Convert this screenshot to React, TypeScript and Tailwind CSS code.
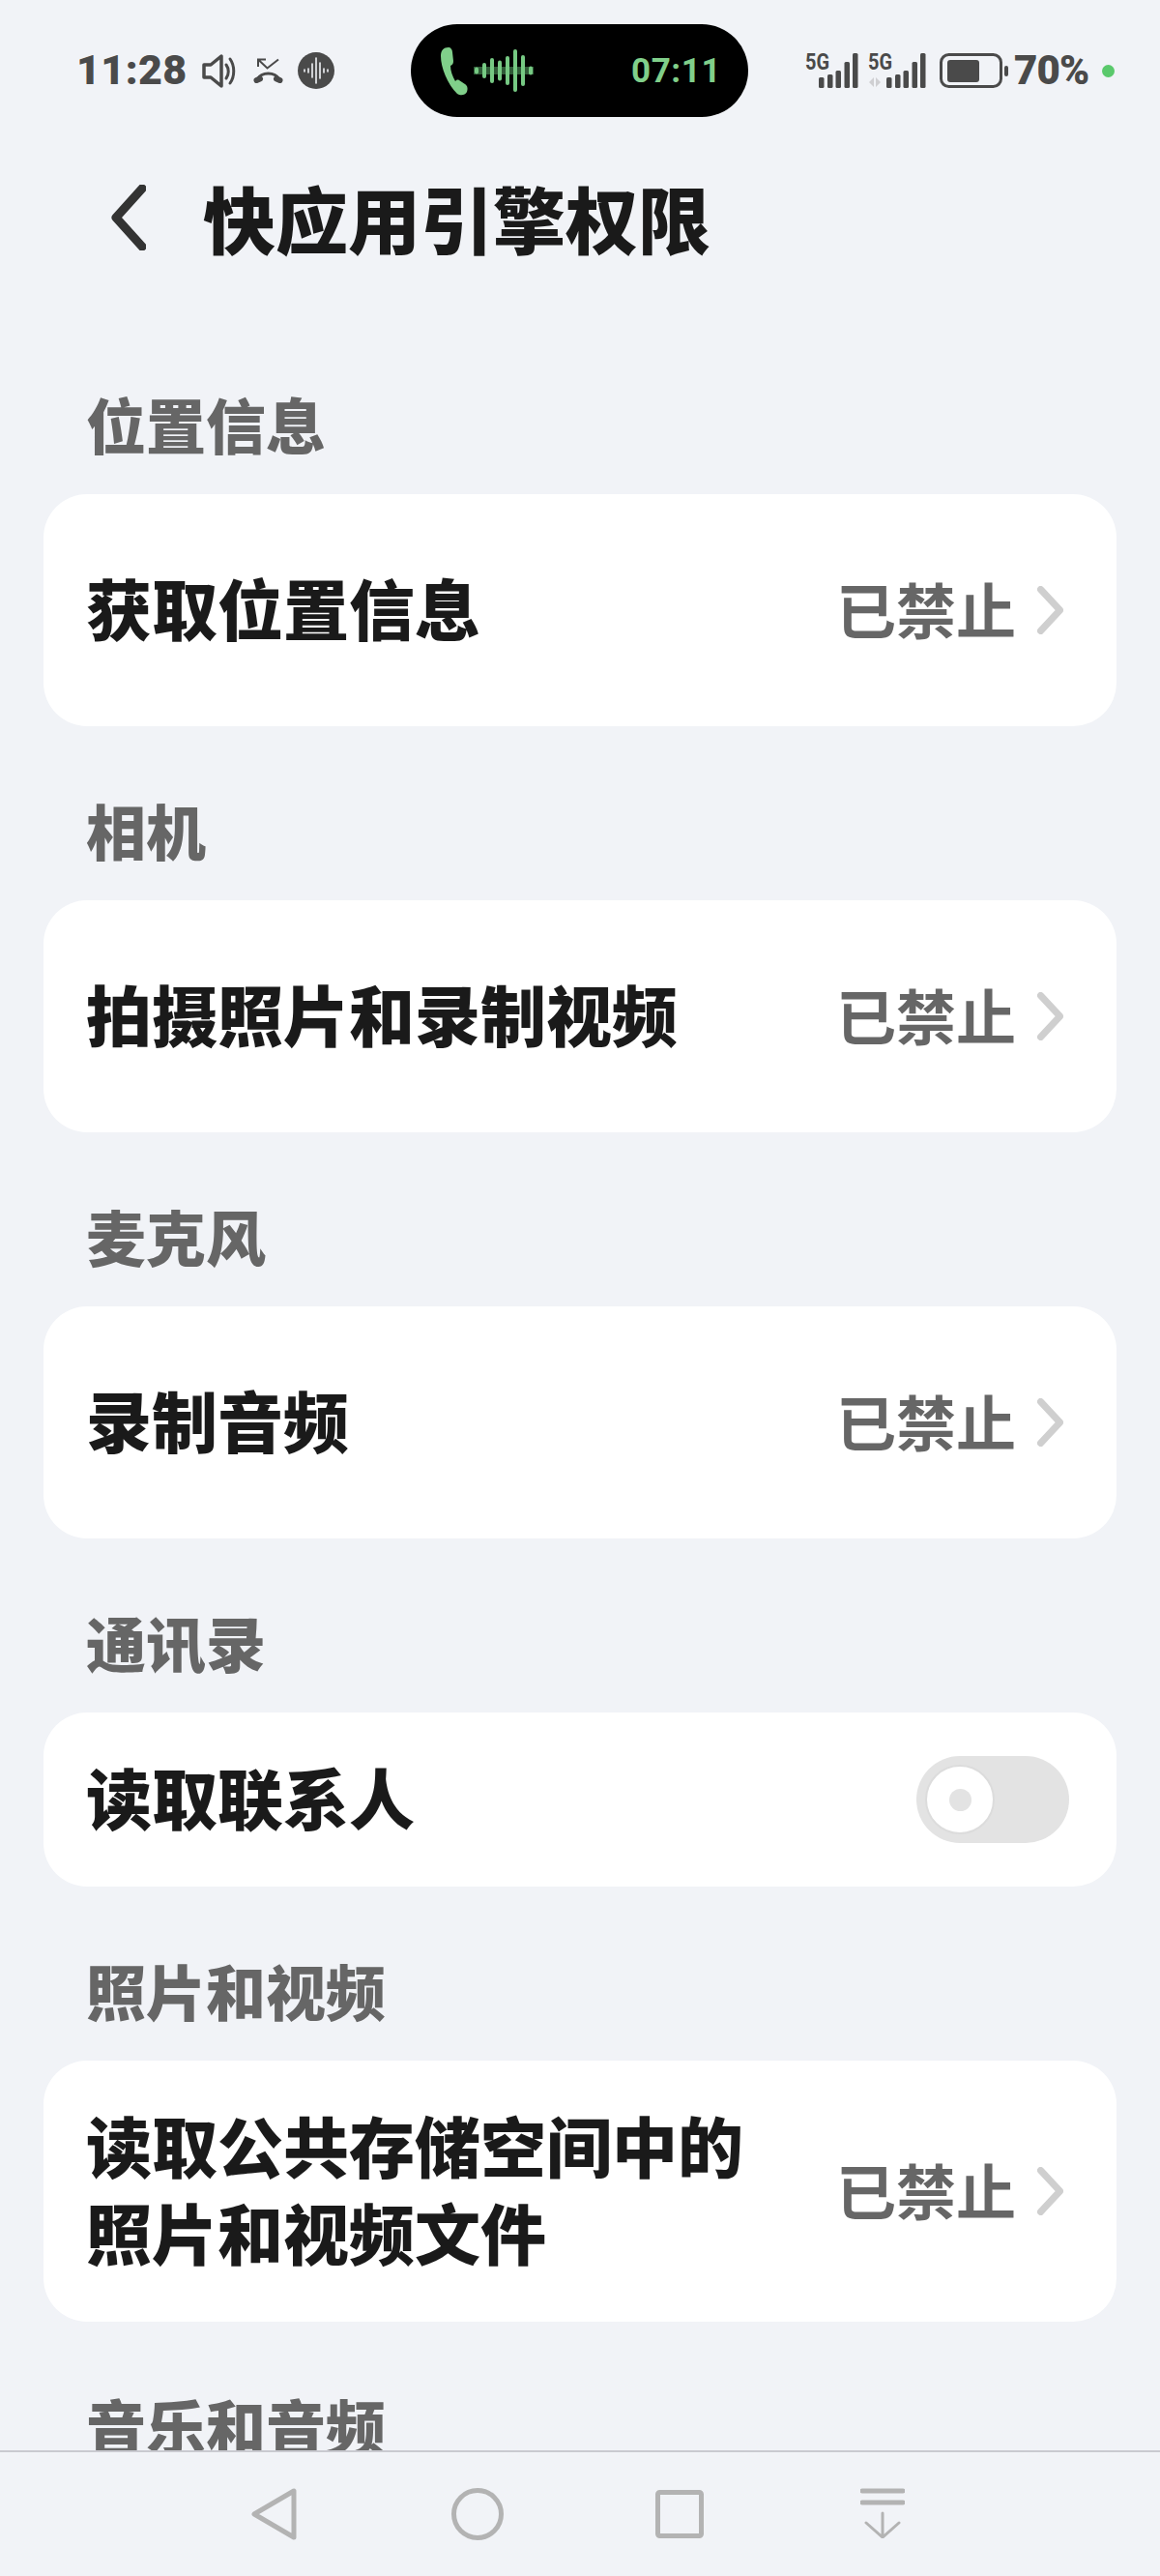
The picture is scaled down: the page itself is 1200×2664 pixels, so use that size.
const cjk = "font-['Noto_Sans_CJK_SC','Noto_Sans',sans-serif]"

function Wave({ className, width, height, color, bars, strokeWidth }: { className: string; width: number; height: number; color: string; bars: number[][]; strokeWidth: number }) {
  return (
    <svg viewBox={`0 0 ${width} ${height}`} className={className}>
      {bars.map(([x, h]) => (
        <line key={x} x1={x} x2={x} y1={height / 2 - h} y2={height / 2 + h} stroke={color} strokeWidth={strokeWidth} strokeLinecap="round" />
      ))}
    </svg>
  )
}

function SpeakerIcon() {
  return (
    <svg viewBox="0 0 36 37" className="w-[36px] h-[37px] ml-[20px]" fill="none" stroke="#4a4a4a">
      <path d="M2 12h7l11-9v31L9 25H2z" strokeWidth="3.5" strokeLinejoin="round" />
      <path d="M25 12c3 4 3 10 0 14" strokeWidth="3" strokeLinecap="round" />
      <path d="M29 6c5 7 5 18 0 25" strokeWidth="3" strokeLinecap="round" />
    </svg>
  )
}

function MissedCallIcon() {
  return (
    <svg viewBox="0 0 31 26" className="w-[31px] h-[26px] ml-[17px]" fill="none" stroke="#4a4a4a">
      <path d="M13 1.5H5V9M5 1.5l9.5 9L26 1.5" strokeWidth="2" />
      <path d="M4 22C9 14 22 14 27 22" strokeWidth="3" />
      <path d="M3.5 23 7 21.5M27.5 23 24 21.5" strokeWidth="6" strokeLinecap="round" />
    </svg>
  )
}

function Signal({ showArrows }: { showArrows?: boolean }) {
  const offset = showArrows ? 5 : 0
  const bars = [
    { x: 14, h: 11 },
    { x: 23, h: 14 },
    { x: 31.5, h: 18 },
    { x: 40.5, h: 27 },
    { x: 49, h: 36 },
  ]
  return (
    <svg viewBox={`0 0 ${55 + offset} 36`} className={showArrows ? "w-[60px] h-[36px] overflow-visible" : "w-[55px] h-[36px] overflow-visible"}>
      <text x="0" y="17" fontFamily="Roboto" fontWeight="700" fontSize="23" fill="#4a4a4a" textLength="25" lengthAdjust="spacingAndGlyphs">5G</text>
      {bars.map((b) => (
        <rect key={b.x} x={b.x + offset} y={36 - b.h} width="5.5" height={b.h} rx="1.5" fill="#4a4a4a" />
      ))}
      {showArrows && <path d="M6 25v10l-5-5zM8 35V25l5 5z" fill="#cfcfd2" />}
    </svg>
  )
}

function StatusBar() {
  return (
    <div className="h-[146px] shrink-0 pt-[25px] flex items-start">
      <div className="h-[96px] flex items-center pl-[79px] w-[425px]">
        <span className="font-['Roboto',sans-serif] font-black text-[43px] leading-none tracking-[0.4px] text-[#4a4a4a] w-[110px] -mt-[2px]">11:28</span>
        <SpeakerIcon />
        <MissedCallIcon />
        <div className="w-[38px] h-[38px] rounded-full bg-[#4a4a4a] ml-[15px] flex items-center justify-center">
          <Wave
            className="w-[30px] h-[30px]"
            width={30}
            height={30}
            color="#f1f3f7"
            strokeWidth={1.6}
            bars={[[3, 1], [7, 2], [11, 7], [15, 13], [19, 8], [23, 2], [27, 1]]}
          />
        </div>
      </div>
      <div className="w-[349px] h-[96px] rounded-[48px] bg-black flex items-center pl-[30px]">
        <svg viewBox="0 0 29 51" className="w-[29px] h-[51px]">
          <path d="M9 1c-5 0-8 3-8 9 0 12 7 29 17 39 3 2 8 2 10-2 1-3 1-6-2-8l-6-4c-2-1-3 0-4 1-3-5-5-11-5-16 2-1 3-2 3-5l-1-9C13 3 11 1 9 1z" fill="#80cf8a" />
        </svg>
        <div className="ml-[6px] w-[62px] h-[44px] flex items-center justify-center bg-[linear-gradient(transparent_40%,#2f5a37_40%,#2f5a37_60%,transparent_60%)]">
          <Wave
            className="w-[62px] h-[44px]"
            width={62}
            height={44}
            color="#76c983"
            strokeWidth={4}
            bars={[[3, 1.5], [11, 6], [19, 11], [27, 8.5], [35, 13], [43, 20], [51, 14], [59, 2.5]]}
          />
        </div>
        <span className="font-['Roboto',sans-serif] font-bold text-[35px] leading-none tracking-[0.6px] text-[#80cf8a] ml-[101px]">07:11</span>
      </div>
      <div className="h-[96px] flex items-center pl-[59px]">
        <Signal />
        <div className="ml-[10px]"><Signal showArrows /></div>
        <svg viewBox="0 0 72 36" className="w-[72px] h-[36px] ml-[14px]">
          <rect x="1.5" y="1.5" width="62" height="33" rx="8" fill="none" stroke="#4a4a4a" strokeWidth="3" />
          <rect x="8" y="7" width="33" height="23" rx="3" fill="#4a4a4a" />
          <rect x="67" y="13" width="4" height="11" rx="2" fill="#4a4a4a" />
        </svg>
        <span className="font-['Roboto',sans-serif] font-black text-[42px] leading-none tracking-[-0.8px] text-[#4a4a4a] ml-[5px] -mt-[1px]">70%</span>
        <div className="w-[13px] h-[13px] rounded-full bg-[#5ac96c] ml-[14px]" />
      </div>
    </div>
  )
}

function Toggle() {
  return (
    <div className="w-[158px] h-[90px] rounded-full bg-[#e3e3e3] flex items-center pl-[9px]">
      <div className="w-[72px] h-[72px] rounded-full bg-white border-2 border-[#dcdcdc] flex items-center justify-center">
        <div className="w-[23px] h-[23px] rounded-full bg-[#e3e3e3]" />
      </div>
    </div>
  )
}

function Row({ lines, height, toggle }: { lines: string[]; height: string; toggle?: boolean }) {
  return (
    <div className={`${height} mx-[45px] w-[1110px] rounded-[45px] bg-white flex items-center justify-between pl-[44px] pr-[49px]`}>
      <div className="text-[68px] leading-[90px] font-black text-[#1a1a1a] pb-[6px]">
        {lines.map((line) => (
          <div key={line}>{line}</div>
        ))}
      </div>
      {toggle ? (
        <Toggle />
      ) : (
        <div className="flex items-center pr-[6px]">
          <span className="text-[62px] leading-[90px] font-bold text-[#666666] pb-[4px]">已禁止</span>
          <svg viewBox="0 0 27 50" className="w-[27px] h-[50px] ml-[22px]" fill="none">
            <path d="M3.5 3.5 23.5 25l-20 21.5" stroke="#cfcfcf" strokeWidth="7" strokeLinecap="round" strokeLinejoin="round" />
          </svg>
        </div>
      )}
    </div>
  )
}

function SectionLabel({ children }: { children: string }) {
  return (
    <div className="h-[180px] pt-[76px] pl-[89px] text-[62px] leading-[62px] font-black text-[#666666]">{children}</div>
  )
}

function NavBar() {
  return (
    <div className="h-[130px] shrink-0 border-t-2 border-[#c9cad0] bg-[#f1f3f7] flex items-start pt-[37px] pl-[260px]">
      <svg viewBox="0 0 48 54" className="w-[48px] h-[54px]" fill="none" stroke="#b3b3b3" strokeWidth="5" strokeLinejoin="round">
        <path d="M44 3v48L3 27z" />
      </svg>
      <svg viewBox="0 0 54 54" className="w-[54px] h-[54px] ml-[159px]" fill="none" stroke="#b3b3b3" strokeWidth="5">
        <circle cx="27" cy="27" r="24.5" />
      </svg>
      <svg viewBox="0 0 50 50" className="w-[50px] h-[50px] ml-[157px] mt-[2px]" fill="none" stroke="#b3b3b3" strokeWidth="5" strokeLinejoin="round">
        <rect x="2.5" y="2.5" width="45" height="45" rx="2" />
      </svg>
      <svg viewBox="0 0 46 52" className="w-[46px] h-[52px] ml-[162px]" fill="none" stroke="#b3b3b3" strokeLinecap="round">
        <path d="M2 3h42M2 15h42" strokeWidth="5" />
        <path d="M23 26v24M6 36l17 15 17-15" strokeWidth="3" />
      </svg>
    </div>
  )
}

export default function App() {
  return (
    <div className={`w-[1200px] h-[2664px] bg-[#f1f3f7] flex flex-col overflow-hidden ${cjk}`}>
      <StatusBar />
      <div className="h-[185px] shrink-0 flex items-center pb-[23px]">
        <svg viewBox="0 0 36 68" className="w-[36px] h-[68px] ml-[115px] -mt-[5px]" fill="none">
          <path d="M32 4 5 34l27 30" stroke="#333333" strokeWidth="9" strokeLinecap="square" strokeLinejoin="round" />
        </svg>
        <h1 className="text-[75px] leading-none font-black text-[#1a1a1a] ml-[59px] -mt-[6px]">快应用引擎权限</h1>
      </div>
      <div className="flex-1 overflow-hidden">
        <SectionLabel>位置信息</SectionLabel>
        <Row lines={["获取位置信息"]} height="h-[240px]" />
        <SectionLabel>相机</SectionLabel>
        <Row lines={["拍摄照片和录制视频"]} height="h-[240px]" />
        <SectionLabel>麦克风</SectionLabel>
        <Row lines={["录制音频"]} height="h-[240px]" />
        <SectionLabel>通讯录</SectionLabel>
        <Row lines={["读取联系人"]} height="h-[180px]" toggle />
        <SectionLabel>照片和视频</SectionLabel>
        <Row lines={["读取公共存储空间中的", "照片和视频文件"]} height="h-[270px]" />
        <SectionLabel>音乐和音频</SectionLabel>
      </div>
      <NavBar />
    </div>
  )
}
